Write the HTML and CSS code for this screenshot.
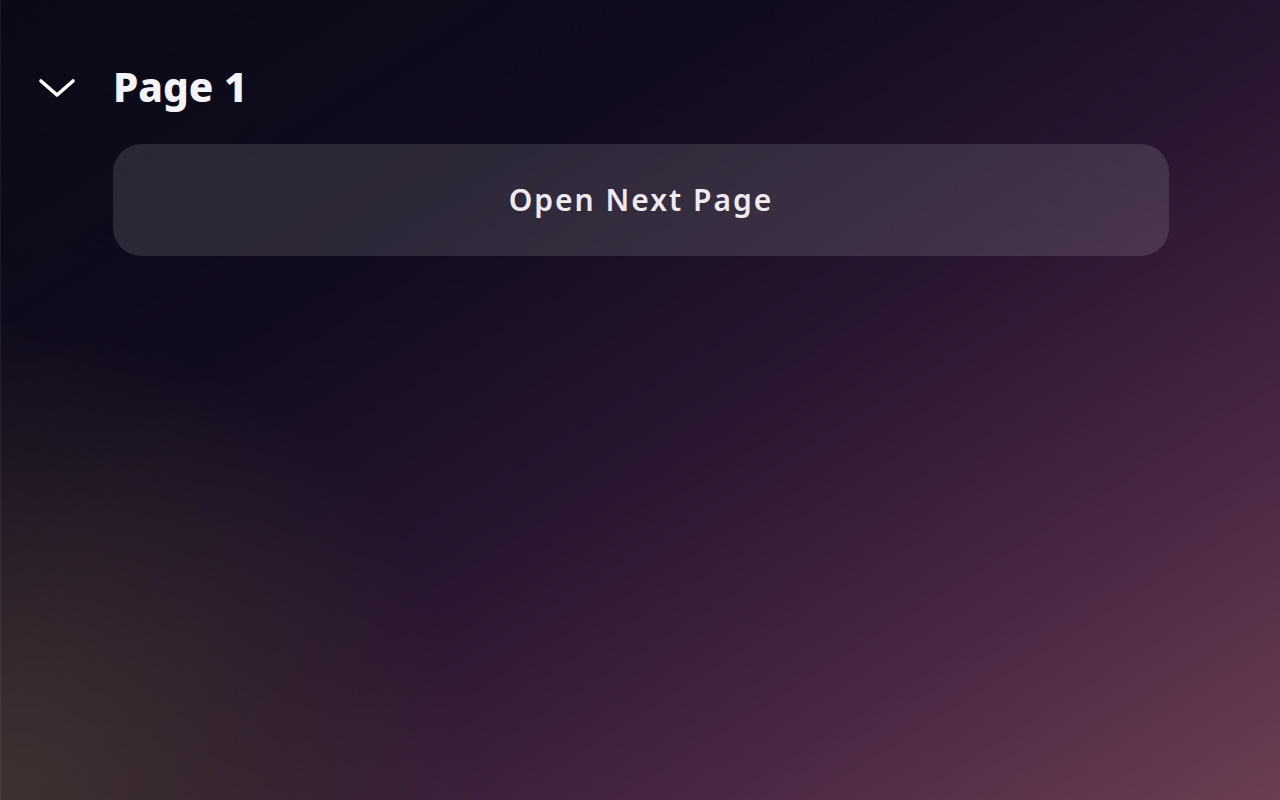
FILE: index.html
```html
<!DOCTYPE html>
<html lang="en">
<head>
<meta charset="utf-8">
<title>Page 1</title>
<link rel="stylesheet" href="styles.css">
</head>
<body>
<main class="screen">
  <header class="page-header">
    <button class="collapse" aria-label="Collapse">
      <svg width="38" height="24" viewBox="0 0 38 24" fill="none">
        <path d="M3 5 L19 19 L35 5" stroke="#ffffff" stroke-width="3.6" stroke-linecap="round" stroke-linejoin="round"/>
      </svg>
    </button>
    <h1 class="title">Page 1</h1>
  </header>
  <div class="content">
    <button class="next-btn">Open Next Page</button>
  </div>
</main>
</body>
</html>
```
FILE: styles.css
```css
html, body {
  margin: 0;
  padding: 0;
  height: 100%;
}
body {
  font-family: "Noto Sans", "DejaVu Sans", sans-serif;
  color: #fff;
  background:
    radial-gradient(circle at 0% 100%, rgba(64, 50, 48, 1) 0, rgba(64, 50, 48, 0) 480px),
    linear-gradient(to bottom right, #0a0a16 0%, #110b1e 30%, #2a1630 55%, #4a2844 78%, #6c3e52 100%);
  border-left: 1px solid rgba(255, 255, 255, 0.07);
  box-sizing: border-box;
  overflow: hidden;
}
.screen {
  height: 800px;
  padding: 64px 111px 0 36px;
  box-sizing: border-box;
}
.page-header {
  display: flex;
  align-items: center;
  gap: 36px;
  height: 48px;
}
.collapse {
  background: none;
  border: 0;
  padding: 0;
  width: 40px;
  height: 24px;
  display: flex;
  align-items: center;
  justify-content: center;
}
.title {
  margin: 0 0 2px 0;
  font-size: 40.5px;
  font-weight: 800;
  line-height: 46px;
  color: #f4f4f6;
}
.content {
  padding-left: 76px;
  margin-top: 32px;
}
.next-btn {
  display: block;
  width: 100%;
  height: 112px;
  border: 0;
  border-radius: 28px;
  background: rgba(255, 255, 255, 0.12);
  color: #eeeaf0;
  font-family: "Noto Sans", "DejaVu Sans", sans-serif;
  font-size: 30px;
  font-weight: 600;
  letter-spacing: 2px;
  padding: 0 0 2px 0;
}
```
